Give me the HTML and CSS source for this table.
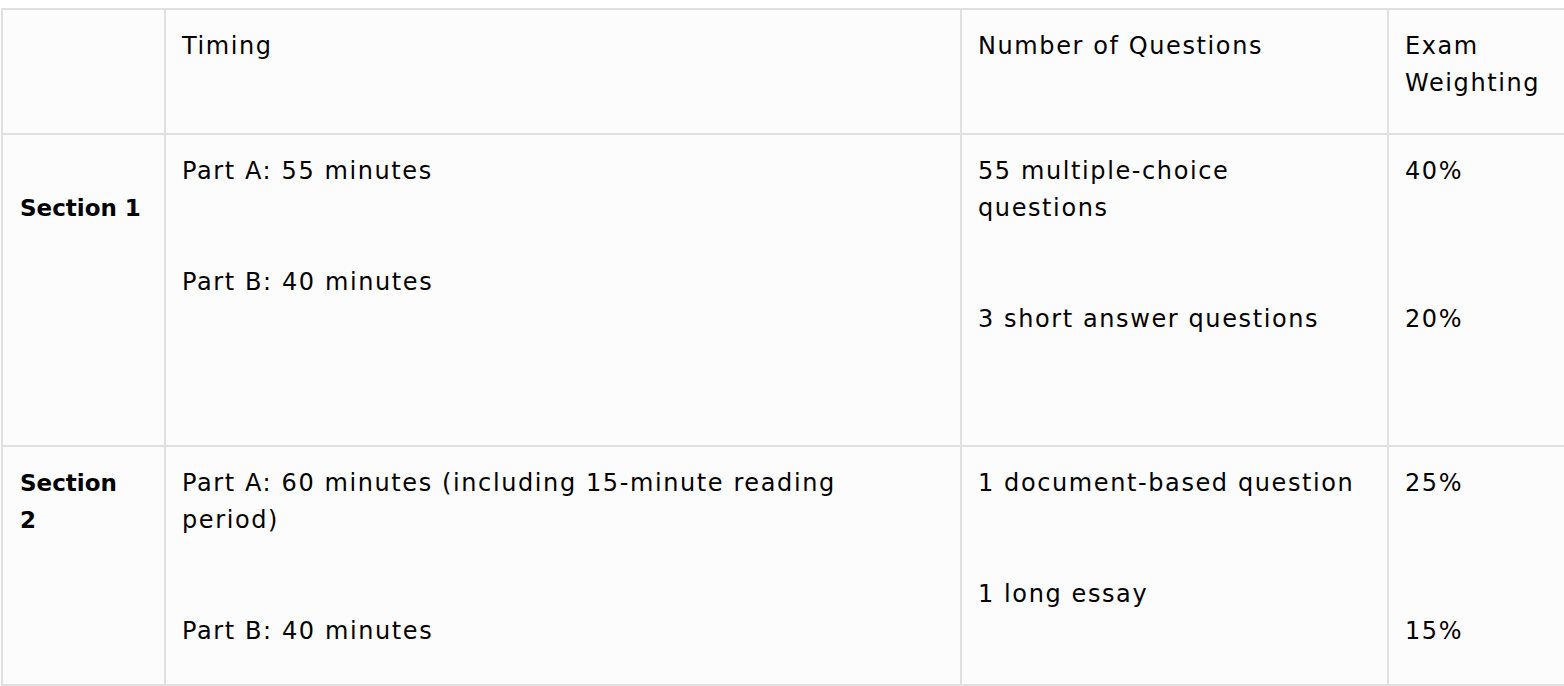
FILE: index.html
```html
<!DOCTYPE html>
<html>
<head>
<meta charset="utf-8">
<link rel="stylesheet" href="styles.css">
</head>
<body>
<table class="exam">
  <colgroup>
    <col class="c-sec">
    <col class="c-time">
    <col class="c-num">
    <col class="c-weight">
  </colgroup>
  <thead>
    <tr class="row-head">
      <th></th>
      <th>Timing</th>
      <th>Number of Questions</th>
      <th>Exam Weighting</th>
    </tr>
  </thead>
  <tbody>
    <tr class="row-s1">
      <th class="sec"><p class="shift">Section 1</p></th>
      <td><p>Part A: 55 minutes</p><p class="gap2">Part B: 40 minutes</p></td>
      <td><p>55 multiple-choice questions</p><p class="gap2">3 short answer questions</p></td>
      <td><p>40%</p><p class="gap3">20%</p></td>
    </tr>
    <tr class="row-s2">
      <th class="sec"><p>Section<br>2</p></th>
      <td><p>Part A: 60 minutes (including 15-minute reading period)</p><p class="gap2">Part B: 40 minutes</p></td>
      <td><p>1 document-based question</p><p class="gap2">1 long essay</p></td>
      <td><p>25%</p><p class="gap3">15%</p></td>
    </tr>
  </tbody>
</table>
</body>
</html>
```
FILE: styles.css
```css
html, body {
  background: #ffffff;
}
body {
  margin: 8px 0 0 1px;
  overflow: hidden;
  font-family: "DejaVu Sans", "Liberation Sans", sans-serif;
  color: #000000;
}
.exam {
  border-collapse: separate;
  border-spacing: 0;
  table-layout: fixed;
  width: 1588px;
  border-top: 2px solid #e0e0e0;
  border-left: 2px solid #e0e0e0;
  background: #fcfcfc;
}
.c-sec { width: 163px; }
.c-time { width: 796px; }
.c-num { width: 427px; }
.c-weight { width: 200px; }
.exam th,
.exam td {
  box-sizing: border-box;
  vertical-align: top;
  text-align: left;
  padding: 18px 22px 18px 16px;
  border-right: 2px solid #e0e0e0;
  border-bottom: 2px solid #e0e0e0;
  font-size: 24px;
  line-height: 37px;
  letter-spacing: 1.6px;
  font-weight: normal;
}
.exam p {
  margin: 0;
}
.exam th.sec {
  font-weight: bold;
  font-size: 23px;
  letter-spacing: 0;
  padding-left: 17px;
}
.exam .shift {
  margin-top: 37px;
}
.exam .gap2 {
  margin-top: 74px;
}
.exam .gap3 {
  margin-top: 111px;
}
.row-head { height: 125px; }
.row-s1 { height: 312px; }
.row-s2 { height: 239px; }
```
